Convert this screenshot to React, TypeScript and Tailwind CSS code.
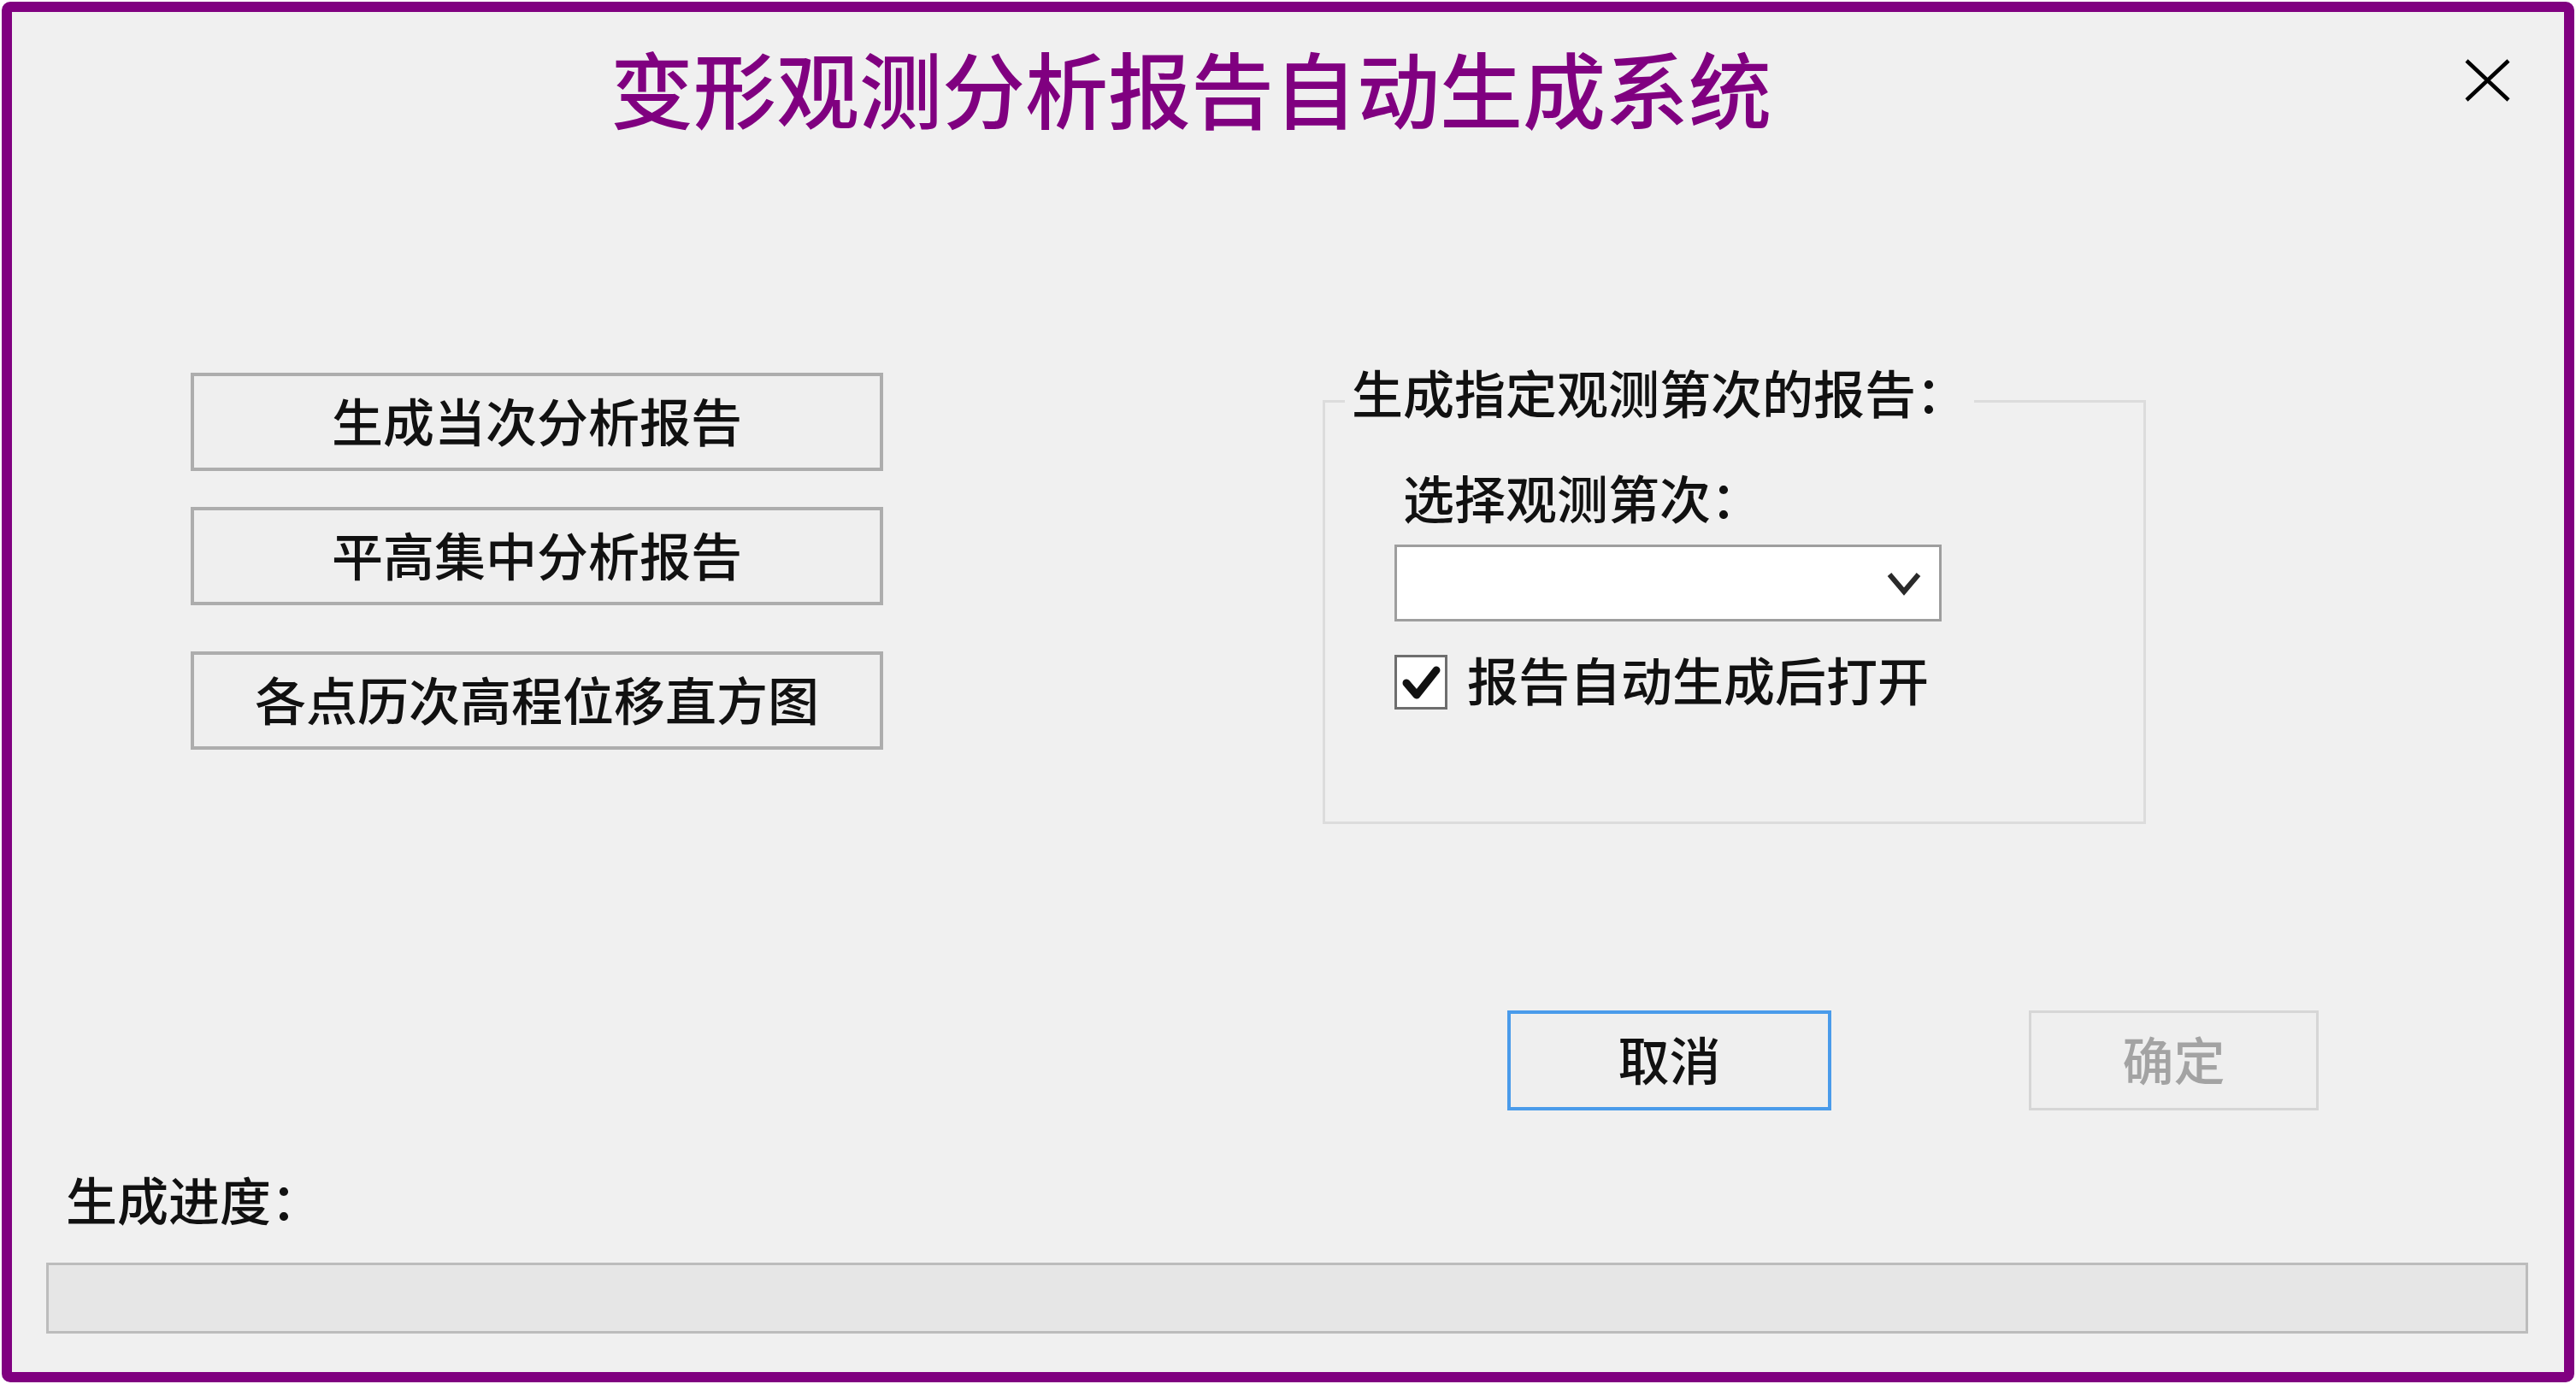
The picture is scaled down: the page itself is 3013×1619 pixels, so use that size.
import { useState } from "react";

const font = "font-['Noto_Sans_CJK_SC','Noto_Sans',sans-serif]";

const leftButtons = [
  { label: "生成当次分析报告", mt: "mt-0" },
  { label: "平高集中分析报告", mt: "mt-[42px]" },
  { label: "各点历次高程位移直方图", mt: "mt-[54px]" },
];

const App = () => {
  const [autoOpen, setAutoOpen] = useState(true);

  return (
    <div className={`w-[3013px] h-[1619px] bg-white p-[2px] font-medium ${font}`}>
      <div className="w-full h-full border-[12px] border-[#800080] rounded-[10px] bg-[#f0f0f0] flex flex-col text-[#111]">
        {/* Header */}
        <div className="flex items-start mt-[38px] h-[97px]">
          <h1 className="ml-[700px] text-[97px] leading-[97px] text-[#800080] font-medium whitespace-nowrap">
            变形观测分析报告自动生成系统
          </h1>
          <svg className="ml-auto mr-[62px] mt-[16px]" width="55" height="52" viewBox="0 0 55 52">
            <path d="M3 3 L52 49 M52 3 L3 49" stroke="#000" strokeWidth="4.5" fill="none" />
          </svg>
        </div>

        {/* Main area */}
        <div className="flex items-start">
          <div className="ml-[209px] mt-[287px] w-[810px] flex flex-col">
            {leftButtons.map((b) => (
              <button
                key={b.label}
                className={`${b.mt} h-[115px] w-full border-[4px] border-[#adadad] bg-[#efefef] flex items-center justify-center pb-[6px] text-[60px] leading-[60px] whitespace-nowrap`}
              >
                {b.label}
              </button>
            ))}
          </div>

          {/* Group box */}
          <div className="relative ml-[514px] mt-[319px] w-[963px] h-[496px] border-[3px] border-[#dcdcdc]">
            <span className="absolute left-[23px] top-[-43px] px-[8px] bg-[#f0f0f0] text-[60px] leading-[60px] whitespace-nowrap">
              生成指定观测第次的报告：
            </span>
            <div className="ml-[91px] mt-[80px] text-[60px] leading-[60px] whitespace-nowrap">选择观测第次：</div>
            <div className="ml-[81px] mt-[26px] w-[640px] h-[90px] border-[3px] border-[#9e9e9e] bg-white flex items-center justify-end pr-[20px]">
              <svg width="42" height="30" viewBox="0 0 42 30">
                <path d="M4 5 L21 25 L38 5" stroke="#2a2a2a" strokeWidth="6" fill="none" />
              </svg>
            </div>
            <div className="ml-[81px] mt-[37px] flex items-center cursor-pointer" onClick={() => setAutoOpen(!autoOpen)}>
              <div className="w-[62px] h-[64px] border-[3px] border-[#6e6e6e] bg-white flex items-center justify-center">
                {autoOpen && (
                  <svg width="56" height="58" viewBox="0 0 56 58">
                    <path d="M11 30 L23 44 L46 15" stroke="#111" strokeWidth="9" fill="none" strokeLinecap="round" strokeLinejoin="round" />
                  </svg>
                )}
              </div>
              <span className="ml-[23px] pb-[8px] text-[60px] leading-[60px] whitespace-nowrap">报告自动生成后打开</span>
            </div>
          </div>
        </div>

        {/* Dialog buttons */}
        <div className="flex items-start mt-[218px]">
          <button className="ml-[1749px] w-[379px] h-[117px] border-[4px] border-[#4a9bea] bg-[#efefef] flex items-center justify-center pb-[6px] text-[60px] leading-[60px]">
            取消
          </button>
          <button disabled className="ml-[231px] w-[339px] h-[117px] border-[3px] border-[#d6d6d6] bg-[#efefef] flex items-center justify-center pb-[6px] text-[60px] leading-[60px] text-[#a3a3a3]">
            确定
          </button>
        </div>

        {/* Progress */}
        <div className="ml-[63px] mt-[73px] text-[60px] leading-[60px] whitespace-nowrap">生成进度：</div>
        <div className="ml-[40px] mt-[45px] w-[2903px] h-[83px] border-[3px] border-[#bcbcbc] bg-[#e6e6e6]" />
      </div>
    </div>
  );
};

export default App;
